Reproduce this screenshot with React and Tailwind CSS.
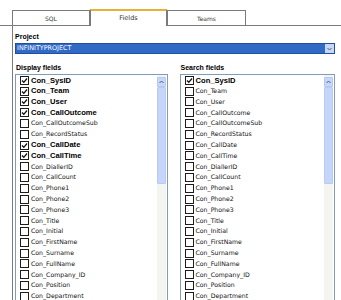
import React from "react";

const fields = [
  ["Con_SysID", true, true],
  ["Con_Team", true, false],
  ["Con_User", true, false],
  ["Con_CallOutcome", true, false],
  ["Con_CallOutcomeSub", false, false],
  ["Con_RecordStatus", false, false],
  ["Con_CallDate", true, false],
  ["Con_CallTime", true, false],
  ["Con_DiallerID", false, false],
  ["Con_CallCount", false, false],
  ["Con_Phone1", false, false],
  ["Con_Phone2", false, false],
  ["Con_Phone3", false, false],
  ["Con_Title", false, false],
  ["Con_Initial", false, false],
  ["Con_FirstName", false, false],
  ["Con_Surname", false, false],
  ["Con_FullName", false, false],
  ["Con_Company_ID", false, false],
  ["Con_Position", false, false],
  ["Con_Department", false, false],
];

function Check({ checked }) {
  return (
    <span className="w-[9px] h-[9px] border border-[#1c1c1c] bg-white flex items-center justify-center shrink-0">
      {checked && (
        <svg width="7" height="7" viewBox="0 0 7 7">
          <path d="M1 3.5 L2.8 5.3 L6 1.5" stroke="#111" strokeWidth="1.3" fill="none" />
        </svg>
      )}
    </span>
  );
}

function ListBox({ label, index, width }) {
  return (
    <div className="flex flex-col" style={{ width }}>
      <div className="h-[11px] flex items-center pl-px text-[7px] font-bold text-black font-['Liberation_Sans',sans-serif]">
        {label}
      </div>
      <div className="border border-[#7f9db9] h-[240px] flex bg-white">
        <div className="flex-1 pl-[4px] flex flex-col">
          {fields.map((f) => {
            const on = f[index];
            return (
              <div key={f[0]} className="h-[10.8px] flex items-center gap-[2px] shrink-0">
                <Check checked={on} />
                {on ? (
                  <span className="text-[7.6px] leading-none font-bold text-black font-['Liberation_Sans',sans-serif]">
                    {f[0]}
                  </span>
                ) : (
                  <span className="text-[6.2px] leading-none text-[#111] font-['DejaVu_Sans',sans-serif]">
                    {f[0]}
                  </span>
                )}
              </div>
            );
          })}
        </div>
        {/* scrollbar */}
        <div className="w-[9px] flex flex-col bg-[#f4f4f0] mr-px">
          <div className="h-[10px] mt-[2px] rounded-[1px] bg-[#c8d7f8] border border-[#b4c8f4] flex items-center justify-center">
            <svg width="5" height="4" viewBox="0 0 5 4">
              <path d="M0.5 3 L2.5 1 L4.5 3" stroke="#4d6185" strokeWidth="1" fill="none" />
            </svg>
          </div>
          <div className="h-[97px] bg-[#c6d6fa] border border-[#b7cbf5] rounded-[1px]" />
          <div className="flex-1" />
          <div className="h-[6px] bg-[#c8d7f8] border border-[#b4c8f4]" />
        </div>
      </div>
    </div>
  );
}

export default function App() {
  return (
    <div className="w-[341px] h-[300px] overflow-hidden bg-white font-['DejaVu_Sans',sans-serif]">
      {/* Tabs */}
      <div className="flex items-end pt-[9px] pl-[12px] border-b border-[#7a7a7a] h-[26px]">
        <div className="w-[78px] h-[15px] border border-b-0 border-[#7a7a7a] bg-white flex items-center justify-center text-[6px] text-[#333]">
          SQL
        </div>
        <div className="w-[77px] h-[17px] -mb-px bg-white border-x border-[#7a7a7a] border-t-2 border-t-[#e5b13a] flex items-center justify-center text-[6.5px] text-[#333]">
          Fields
        </div>
        <div className="w-[79px] h-[15px] border border-b-0 border-[#7a7a7a] bg-white flex items-center justify-center text-[6px] text-[#333]">
          Teams
        </div>
      </div>

      {/* Panel */}
      <div className="ml-[12px] border-l border-[#7a7a7a] h-[274px] pl-[2px] pr-[6px]">
        <div className="h-[15px] pt-[7px] flex items-center text-[7px] font-bold text-black font-['Liberation_Sans',sans-serif]">
          Project
        </div>
        <div className="mt-[2px] h-[11px] bg-[#316ac5] border border-[#1f4fa0] flex items-center">
          <span className="flex-1 pl-px text-[6.4px] text-white leading-none">INFINITYPROJECT</span>
          <span className="w-[9px] h-[9px] bg-[#c8d7f8] flex items-center justify-center">
            <svg width="5" height="4" viewBox="0 0 5 4">
              <path d="M0.5 1 L2.5 3 L4.5 1" stroke="#4d6185" strokeWidth="1" fill="none" />
            </svg>
          </span>
        </div>
        <div className="mt-[9px] flex gap-[12px]">
          <ListBox label="Display fields" index={1} width={154} />
          <ListBox label="Search fields" index={2} width={157} />
        </div>
      </div>
    </div>
  );
}
